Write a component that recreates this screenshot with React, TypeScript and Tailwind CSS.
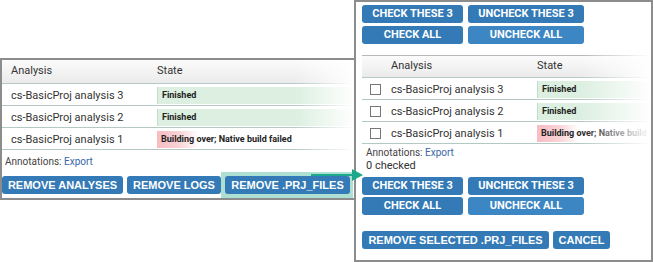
import React from 'react';

type Row = { name: string; state: string; failed?: boolean };

const rows: Row[] = [
  { name: 'cs-BasicProj analysis 3', state: 'Finished' },
  { name: 'cs-BasicProj analysis 2', state: 'Finished' },
  { name: 'cs-BasicProj analysis 1', state: 'Building over; Native build failed', failed: true },
];

const Badge: React.FC<{ row: Row }> = ({ row }) => (
  <div
    className={
      row.failed
        ? 'flex-1 min-w-0 overflow-hidden h-[17px] pl-[4px] leading-[17px] text-[9px] font-bold text-[#222] whitespace-nowrap bg-[linear-gradient(to_right,#f7bcc2_0px,#f9d3d6_22px,#ffffff_42px)]'
        : 'flex-1 min-w-0 overflow-hidden h-[17px] pl-[4px] leading-[17px] text-[9px] font-bold text-[#222] whitespace-nowrap bg-[#dcefe0] border-l border-[#c5dccb]'
    }
  >
    {row.state}
  </div>
);

const BlueButton: React.FC<{ label: string; className: string }> = ({ label, className }) => (
  <button className={`block shrink-0 h-[18px] rounded-[3px] text-white font-bold text-[11px] leading-[18px] text-center whitespace-nowrap ${className}`}>
    {label}
  </button>
);

const App: React.FC = () => {
  return (
    <div className="relative w-[653px] h-[262px] bg-white overflow-hidden font-['Roboto',sans-serif]">
      {/* Left window: before */}
      <div className="absolute left-0 top-[58px] w-[356px] h-[142px] border-2 border-[#8c8c8c] bg-white">
        <div className="relative">
          <div className="flex items-center h-[24px] border-b border-[#b4c9c3] bg-linear-to-b from-[#fbfbfb] to-[#ebebeb] text-[11px] text-[#333]">
            <div className="w-[155px] shrink-0 pl-[9px]">Analysis</div>
            <div>State</div>
          </div>
          {rows.map((r) => (
            <div key={r.name} className="flex items-start pt-[3px] h-[22px] border-b border-[#b4c9c3] text-[11px] text-[#333]">
              <div className="w-[155px] shrink-0 pl-[9px] leading-[17px] whitespace-nowrap">{r.name}</div>
              <Badge row={r} />
            </div>
          ))}
          <div className="absolute right-0 top-0 bottom-0 w-[60px] bg-linear-to-r from-white/0 to-white" />
        </div>
        <div className="mt-[6px] h-[12px] pl-[3px] leading-[12px] text-[10px] text-[#444]">
          Annotations: <span className="text-[#3866a8]">Export</span>
        </div>
        <div className="mt-[8px] flex items-start gap-[4px] font-['Liberation_Sans',Arial,sans-serif]">
          <BlueButton label="REMOVE ANALYSES" className="w-[121px] bg-[#337ab7]" />
          <BlueButton label="REMOVE LOGS" className="w-[94px] bg-[#337ab7]" />
          <div className="flex -ml-[4px] -mt-[4px] -mb-[4px] pl-[4px] pt-[4px] pb-[4px] pr-[3px] bg-[#ade0d2]">
            <BlueButton label="REMOVE .PRJ_FILES" className="w-[125px] bg-[#337ab7]" />
          </div>
        </div>
      </div>

      {/* Right window: after */}
      <div className="absolute left-[354px] top-0 w-[299px] h-[262px] border-2 border-[#8c8c8c] bg-white">
        <div className="pt-[3px] pl-[6px] flex flex-col gap-[3px]">
          <div className="flex gap-[5px]">
            <BlueButton label="CHECK THESE 3" className="w-[101px] bg-[#337ab7]" />
            <BlueButton label="UNCHECK THESE 3" className="w-[116px] bg-[#337ab7]" />
          </div>
          <div className="flex gap-[5px]">
            <BlueButton label="CHECK ALL" className="w-[101px] bg-[#337ab7]" />
            <BlueButton label="UNCHECK ALL" className="w-[116px] bg-[#3b86c3]" />
          </div>
        </div>

        <div className="relative ml-[6px] mt-[11px]">
          <div className="flex items-center h-[23px] border-t border-b border-t-[#b8b8b8] border-b-[#b4c9c3] bg-linear-to-b from-[#fbfbfb] to-[#ebebeb] text-[11px] text-[#333]">
            <div className="w-[29px] shrink-0" />
            <div className="w-[146px] shrink-0">Analysis</div>
            <div>State</div>
          </div>
          {rows.map((r) => (
            <div key={r.name} className="flex items-start pt-[3px] h-[22px] border-b border-[#b4c9c3] text-[11px] text-[#333]">
              <div className="w-[29px] shrink-0 pl-[8px] pt-[3px]">
                <div className="w-[11px] h-[11px] border border-[#777] bg-white" />
              </div>
              <div className="w-[146px] shrink-0 leading-[17px] whitespace-nowrap">{r.name}</div>
              <Badge row={r} />
            </div>
          ))}
          <div className="absolute right-0 top-0 bottom-0 w-[70px] bg-linear-to-r from-white/0 to-white" />
        </div>

        <div className="mt-[3px] h-[12px] pl-[10px] leading-[12px] text-[10px] text-[#444]">
          Annotations: <span className="text-[#3866a8]">Export</span>
        </div>
        <div className="h-[14px] pl-[10px] leading-[14px] text-[11px] text-[#333]">0 checked</div>

        <div className="mt-[4px] pl-[6px] flex flex-col gap-[2px]">
          <div className="flex gap-[5px]">
            <BlueButton label="CHECK THESE 3" className="w-[101px] bg-[#337ab7]" />
            <BlueButton label="UNCHECK THESE 3" className="w-[116px] bg-[#337ab7]" />
          </div>
          <div className="flex gap-[5px]">
            <BlueButton label="CHECK ALL" className="w-[101px] bg-[#337ab7]" />
            <BlueButton label="UNCHECK ALL" className="w-[116px] bg-[#3b86c3]" />
          </div>
        </div>

        <div className="mt-[16px] pl-[6px] flex gap-[4px] font-['Liberation_Sans',Arial,sans-serif]">
          <BlueButton label="REMOVE SELECTED .PRJ_FILES" className="w-[187px] bg-[#337ab7]" />
          <BlueButton label="CANCEL" className="w-[57px] bg-[#337ab7]" />
        </div>
      </div>

      {/* Arrow from the highlighted button to the result */}
      <svg className="absolute left-[308px] top-[166px] w-[58px] h-[18px] z-10" viewBox="0 0 58 18">
        <line x1="3" y1="9" x2="47" y2="9" stroke="#1ea88b" strokeWidth="2" />
        <polygon points="44,3 55,9 44,15" fill="#1ea88b" />
      </svg>
    </div>
  );
};

export default App;
